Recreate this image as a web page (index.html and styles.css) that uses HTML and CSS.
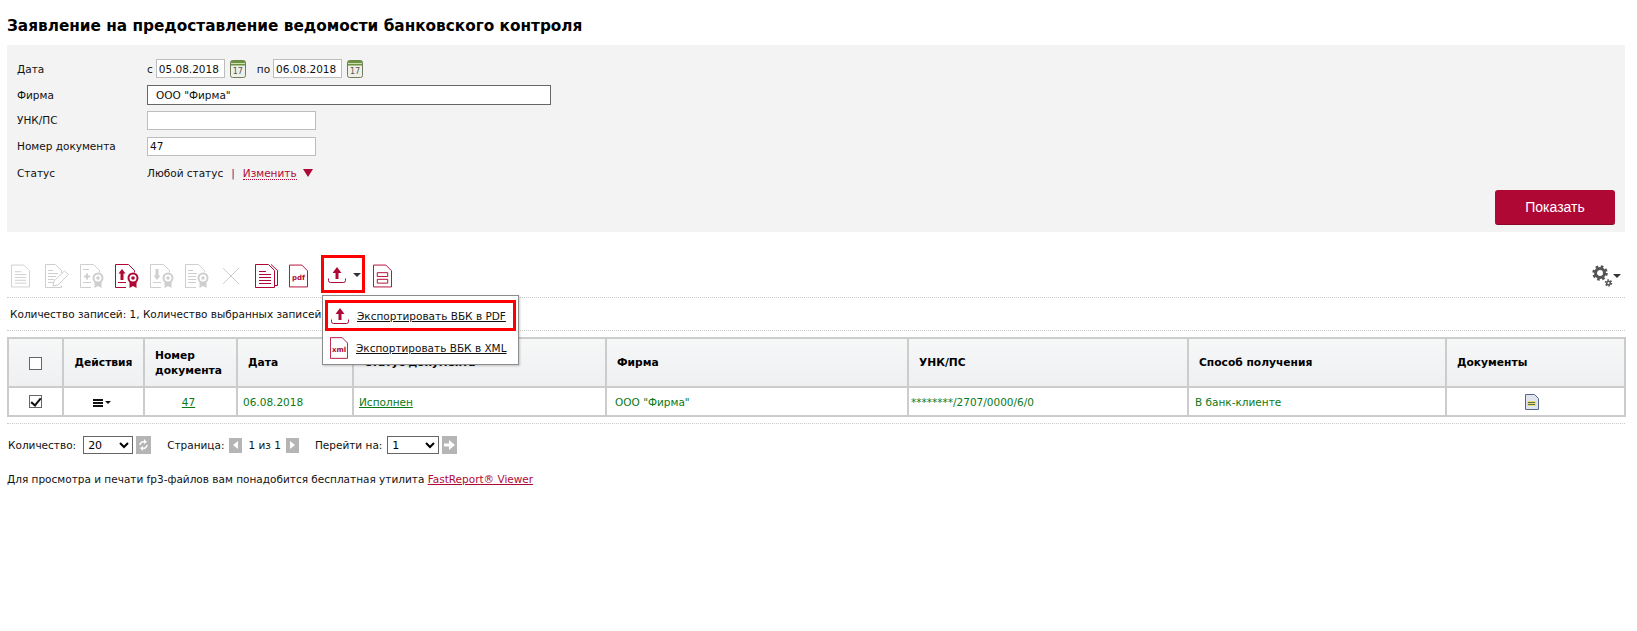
FILE: index.html
```html
<!DOCTYPE html>
<html lang="ru">
<head>
    <meta charset="UTF-8">
    <title>Заявление на предоставление ведомости банковского контроля</title>
    <link rel="stylesheet" href="styles.css">
</head>
<body>
<svg class="defs" width="0" height="0">
    <symbol id="sheet" viewBox="0 0 20 24">
        <path d="M.5.500h13l6 6v17H.5z" fill="none" stroke="currentColor"/>
    </symbol>
    <symbol id="doc" viewBox="0 0 20 24">
        <path d="M.5.500h13l6 6v17H.5z" fill="none" stroke="currentColor"/>
        <path d="M4 7.500h7M4 10.500h12M4 13.500h12M4 16.500h12M4 19.500h12" stroke="currentColor"/>
    </symbol>
    <symbol id="doc-edit" viewBox="0 0 24 24">
        <path d="M16.500 9V6.500l-6-6H.5v23h16v-2" fill="none" stroke="currentColor"/>
        <path d="M3 6.500h5M3 9.500h10M3 12.500h8M3 15.500h6M3 18.500h5" stroke="currentColor"/>
        <path d="M8 22l1-5L19.500 7l4 3.500L13 21z" fill="#fff" stroke="currentColor"/>
    </symbol>
    <symbol id="seal" viewBox="0 0 24 24">
        <path d="M11 23.500H.5V.5h13l6 6v2" fill="none" stroke="currentColor"/>
        <path d="M3 18.500h8" stroke="currentColor"/>
        <path d="M14.500 17v7l3.500-2 3.500 2v-7z" fill="currentColor"/>
        <circle cx="18" cy="14" r="4.500" fill="#fff" stroke="currentColor" stroke-width="2"/>
        <circle cx="18" cy="14" r="1.800" fill="currentColor"/>
    </symbol>
    <symbol id="export" viewBox="0 0 18 16">
        <path d="M9 0l4.500 6H10.500v6h-3V6H4.500z" fill="currentColor"/>
        <path d="M.5 11.500v2q0 2 2 2h13q2 0 2-2v-2" fill="none" stroke="currentColor"/>
    </symbol>
    <symbol id="calendar" viewBox="0 0 16 18">
        <rect x=".5" y=".5" width="15" height="17" rx="2" fill="#eef0e8" stroke="#6f7d5e"/>
        <path d="M1 2q0-1.500 1.500-1.500h11Q15 .5 15 2v3.500H1z" fill="#6c9440"/>
        <path d="M1 3.500h14" stroke="#cfe0b4"/>
    </symbol>
</svg>

<div class="page">
    <h1 class="title">Заявление на предоставление ведомости банковского контроля</h1>

    <form class="filter">
        <div class="filter-row">
            <span class="filter-label">Дата</span>
            <span class="date-part">с</span>
            <input class="field field-date" type="text" value="05.08.2018">
            <span class="cal"><svg width="16" height="18"><use href="#calendar"/></svg><i>17</i></span>
            <span class="date-part date-to">по</span>
            <input class="field field-date" type="text" value="06.08.2018">
            <span class="cal"><svg width="16" height="18"><use href="#calendar"/></svg><i>17</i></span>
        </div>
        <div class="filter-row">
            <span class="filter-label">Фирма</span>
            <input class="field field-firm" type="text" value="ООО &quot;Фирма&quot;">
        </div>
        <div class="filter-row">
            <span class="filter-label">УНК/ПС</span>
            <input class="field field-mid" type="text">
        </div>
        <div class="filter-row">
            <span class="filter-label">Номер документа</span>
            <input class="field field-mid" type="text" value="47">
        </div>
        <div class="filter-row filter-row-last">
            <span class="filter-label">Статус</span>
            <span>Любой статус</span>
            <span class="sep">|</span>
            <a class="change" href="#">Изменить</a>
            <span class="change-arrow"></span>
        </div>
        <div class="filter-actions">
            <button class="btn-show" type="button">Показать</button>
        </div>
    </form>

    <div class="toolbar">
        <svg class="tb tb-off tb-first" width="19" height="24"><use href="#doc"/></svg>
        <svg class="tb tb-off" width="24" height="24"><use href="#doc-edit"/></svg>
        <svg class="tb tb-off" width="24" height="24" viewBox="0 0 24 24"><use href="#seal"/><path d="M4 12.500h6M7 9.500v6" stroke="currentColor" stroke-width="2"/><path d="M3 5.500h6" stroke="currentColor"/></svg>
        <svg class="tb tb-on" width="24" height="24" viewBox="0 0 24 24"><use href="#seal"/><path d="M7 5l3.500 4.500H8.500V16h-3V9.500h-2z" fill="currentColor"/></svg>
        <svg class="tb tb-off" width="24" height="24" viewBox="0 0 24 24"><use href="#seal"/><path d="M7 16l3.500-4.500H8.500V5h-3v6.500h-2z" fill="currentColor"/></svg>
        <svg class="tb tb-off" width="24" height="24" viewBox="0 0 24 24"><use href="#seal"/><path d="M3 6.500h5M3 9.500h9M3 12.500h8M3 15.500h8" stroke="currentColor"/></svg>
        <svg class="tb tb-off tb-x" width="18" height="18" viewBox="0 0 18 18"><path d="M1 1l16 16M17 1L1 17" stroke="currentColor" fill="none"/></svg>
        <svg class="tb tb-on" width="23" height="24" viewBox="0 0 23 24">
            <path d="M16 .5l6.500 6v15H20" fill="none" stroke="currentColor"/>
            <path d="M.5.500h13l6 6v17H.5z" fill="none" stroke="currentColor"/>
            <path d="M4 7.500h7M4 10.500h12M4 13.500h12M4 16.500h12M4 19.500h12" stroke="currentColor"/>
        </svg>
        <span class="tb-ic tb-on tb-pdf"><svg width="19" height="24"><use href="#sheet"/></svg><b class="file-ext">pdf</b></span>
        <span class="export-btn">
            <svg class="tb-on" width="18" height="16"><use href="#export"/></svg>
            <span class="caret"></span>
        </span>
        <svg class="tb tb-on tb-last" width="19" height="24" viewBox="0 0 20 24">
            <path d="M.5.500h13l6 6v17H.5z" fill="none" stroke="currentColor"/>
            <path d="M4.500 8.500h11v4h-11zM4.500 15.500h11v4h-11z" fill="none" stroke="currentColor"/>
        </svg>
        <span class="gear">
            <svg width="21" height="22" viewBox="0 0 21 22">
                <g fill="none" stroke="#555">
                    <circle cx="8" cy="8" r="4.500" stroke-width="3"/>
                    <circle cx="8" cy="8" r="6.500" stroke-width="2.500" stroke-dasharray="2.600 2.500"/>
                    <circle cx="16.500" cy="18" r="1.800" stroke-width="1.500"/>
                    <circle cx="16.500" cy="18" r="3" stroke-width="1.500" stroke-dasharray="1.600 1.540"/>
                </g>
            </svg>
            <span class="caret"></span>
        </span>
    </div>

    <div class="records">Количество записей: 1, Количество выбранных записей: 1</div>

    <table class="docs">
        <colgroup>
            <col class="c-check"><col class="c-act"><col class="c-num"><col class="c-date">
            <col class="c-status"><col class="c-firm"><col class="c-unk"><col class="c-way"><col class="c-files">
        </colgroup>
        <thead>
            <tr>
                <th class="center"><span class="check"></span></th>
                <th class="center">Действия</th>
                <th>Номер<br>документа</th>
                <th>Дата</th>
                <th>Статус документа</th>
                <th>Фирма</th>
                <th>УНК/ПС</th>
                <th>Способ получения</th>
                <th>Документы</th>
            </tr>
        </thead>
        <tbody>
            <tr>
                <td class="center"><span class="check checked"></span></td>
                <td class="center td-act"><span class="burger"></span><span class="caret caret-sm"></span></td>
                <td class="center td-num"><a href="#">47</a></td>
                <td>06.08.2018</td>
                <td><a href="#">Исполнен</a></td>
                <td class="td-firm">ООО "Фирма"</td>
                <td class="td-unk">********/2707/0000/6/0</td>
                <td class="td-way">В банк-клиенте</td>
                <td class="center td-files">
                    <svg class="file-ic" width="14" height="16" viewBox="0 0 14 16">
                        <path d="M.5.500h9l4 4v11H.5z" fill="#dfe4ee" stroke="#56658a"/>
                        <path d="M2 7h9v5H2z" fill="#e6df7a"/>
                        <path d="M3 8.500h7M3 10.500h7" stroke="#5f6b45"/>
                    </svg>
                </td>
            </tr>
        </tbody>
    </table>

    <div class="pager">
        <span class="pager-count">Количество:</span>
        <select class="pick pick-count"><option>20</option></select>
        <span class="sq sq-big">
            <svg width="9" height="12" viewBox="0 0 9 12"><path d="M1 6a3.500 3.500 0 0 1 5-3M8 6a3.500 3.500 0 0 1-5 3" fill="none" stroke="#fff" stroke-width="1.500"/><path d="M5 0l3 3-3 2zM4 12L1 9l3-2z" fill="#fff"/></svg>
        </span>
        <span class="pager-gap">Страница:</span>
        <span class="sq"><i class="tri tri-l"></i></span>
        <span class="pager-of">1 из 1</span>
        <span class="sq"><i class="tri tri-r"></i></span>
        <span class="pager-gap">Перейти на:</span>
        <select class="pick pick-go"><option>1</option></select>
        <span class="sq sq-big sq-go">
            <svg width="11" height="10" viewBox="0 0 11 10"><path d="M0 3.500h5V0l6 5-6 5V6.500H0z" fill="#fff"/></svg>
        </span>
    </div>

    <p class="note">Для просмотра и печати fp3-файлов вам понадобится бесплатная утилита <a href="#">FastReport® Viewer</a></p>
</div>

<div class="export-menu">
    <a class="menu-item menu-item-hl" href="#"><svg class="tb-on" width="18" height="16"><use href="#export"/></svg><span>Экспортировать ВБК в PDF</span></a>
    <a class="menu-item menu-item-xml" href="#"><span class="tb-ic tb-on menu-xml"><svg width="18" height="24"><use href="#sheet"/></svg><b class="file-ext">xml</b></span><span>Экспортировать ВБК в XML</span></a>
</div>
</body>
</html>
```

FILE: styles.css
```css
html, body {
    margin: 0;
    padding: 0;
    background: #fff;
}

body {
    font-family: "DejaVu Sans", Tahoma, sans-serif;
    font-size: 10.5px;
    color: #111;
    position: relative;
}

.defs {
    position: absolute;
}

.page {
    padding: 0 12px 0 7px;
}

.title {
    margin: 0;
    padding-top: 16px;
    height: 29px;
    font-size: 15.3px;
    line-height: 20px;
    font-weight: bold;
    color: #000;
}

/* filter panel */
.filter {
    background: #f3f3f3;
    height: 187px;
    padding: 11px 10px 0 10px;
    box-sizing: border-box;
}

.filter-row {
    display: flex;
    align-items: center;
    height: 25.800px;
}

.filter-row-last {
    padding-top: 1px;
}

.filter-label {
    width: 130px;
    flex: none;
}

.field {
    box-sizing: border-box;
    border: 1px solid #bdbdbd;
    background: #fff;
    height: 19px;
    padding: 0 2px;
    font: 10.5px "DejaVu Sans", Tahoma, sans-serif;
    color: #111;
    margin: 0;
    outline: none;
}

.field-date {
    width: 69px;
}

.field-firm {
    width: 404px;
    height: 20px;
    border: 1px solid #666;
    padding-left: 8px;
}

.field-mid {
    width: 169px;
}

.date-part {
    margin-right: 3px;
}

.date-to {
    margin-left: 11px;
}

.cal {
    position: relative;
    width: 16px;
    height: 18px;
    margin-left: 5px;
}

.cal i {
    position: absolute;
    left: 0;
    right: 0;
    top: 7px;
    text-align: center;
    font-style: normal;
    font-size: 8px;
    line-height: 10px;
    color: #555;
}

.sep {
    margin: 0 8px;
    color: #223a80;
}

.change {
    color: #b00835;
    text-decoration: none;
    border-bottom: 1px dotted #b00835;
}

.change-arrow {
    width: 0;
    height: 0;
    margin-left: 6px;
    border-left: 5px solid transparent;
    border-right: 5px solid transparent;
    border-top: 8px solid #b00835;
}

.filter-actions {
    display: flex;
    justify-content: flex-end;
    margin-top: 4px;
}

.btn-show {
    width: 120px;
    height: 35px;
    background: #b00835;
    border: 0;
    border-bottom: 1px solid #8a0628;
    border-radius: 3px;
    color: #fff;
    font: 14px "Liberation Sans", Arial, sans-serif;
}

/* toolbar */
.toolbar {
    display: flex;
    align-items: center;
    height: 66px;
    padding: 22px 4px 0 4px;
    box-sizing: border-box;
    border-bottom: 1px dotted #ccc;
}

.tb-off {
    color: #cfcfcf;
}

.tb-on {
    color: #b00835;
}

.tb, .tb-ic {
    flex: none;
    margin-right: 11px;
}

.tb-first {
    margin-right: 15px;
}

.tb-ic {
    position: relative;
    width: 24px;
    height: 24px;
}

.tb-x {
    margin: 0 15px 0 2px;
}

.tb-pdf {
    width: 19px;
    margin-right: 13px;
}

.file-ext {
    position: absolute;
    left: 1px;
    right: 1px;
    bottom: 5px;
    text-align: center;
    font: bold 7px/10px "DejaVu Sans", sans-serif;
}

.export-btn {
    display: flex;
    align-items: center;
    box-sizing: border-box;
    width: 44px;
    height: 38px;
    border: 3px solid #f00;
    padding: 3px 0 0 4px;
    margin: -4px 8px 0 0;
    flex: none;
}

.caret {
    display: inline-block;
    width: 0;
    height: 0;
    margin-left: 7px;
    border-left: 4px solid transparent;
    border-right: 4px solid transparent;
    border-top: 4px solid #333;
}

.gear {
    margin-left: auto;
    display: flex;
    align-items: center;
}

.gear .caret {
    margin-left: 0;
}

.records {
    height: 33px;
    line-height: 33px;
    padding-left: 3px;
    border-bottom: 1px dotted #ccc;
    box-sizing: border-box;
}

/* table */
.docs {
    border-collapse: collapse;
    table-layout: fixed;
    width: 1617px;
    margin-top: 6px;
}

.c-check { width: 55px; }
.c-act { width: 81px; }
.c-num { width: 93px; }
.c-date { width: 116px; }
.c-status { width: 253px; }
.c-firm { width: 302px; }
.c-unk { width: 280px; }
.c-way { width: 258px; }
.c-files { width: 179px; }

.docs th, .docs td {
    border: 2px solid #ccc;
    padding: 0 10px;
    text-align: left;
}

.docs th {
    height: 47px;
    font-size: 10.7px;
    line-height: 15px;
    background: linear-gradient(#f6f7f7, #eff0f2);
    color: #000;
}

.docs td {
    height: 27px;
    color: #0a7a16;
    padding: 0 5px;
}

.docs .center {
    text-align: center;
}

.docs .td-act {
    padding-right: 8px;
}

.docs .td-num {
    padding-right: 9px;
}

.docs .td-firm {
    padding-left: 8px;
}

.docs .td-unk {
    padding-left: 2px;
}

.docs .td-way {
    padding-left: 6px;
}

.docs .td-files {
    padding-right: 13px;
}

.docs a {
    color: #0a7a16;
}

.check {
    display: inline-block;
    box-sizing: border-box;
    width: 13px;
    height: 13px;
    border: 1px solid #666;
    background: #fff;
    position: relative;
    vertical-align: middle;
}

.checked::after {
    content: "";
    position: absolute;
    left: 3px;
    top: 0;
    width: 4px;
    height: 8px;
    border: solid #111;
    border-width: 0 2px 2px 0;
    transform: rotate(40deg);
}

.burger {
    display: inline-block;
    width: 10px;
    height: 2px;
    background: #111;
    box-shadow: 0 -3px 0 #111, 0 3px 0 #111;
    vertical-align: 2px;
}

.caret-sm {
    margin-left: 2px;
    border-width: 3px 3px 0;
    border-top-color: #111;
    vertical-align: 2px;
}

.file-ic {
    vertical-align: middle;
}

/* pager */
.pager {
    display: flex;
    align-items: center;
    gap: 5px;
    margin-top: 6px;
    padding: 11px 0 0 1px;
    height: 20px;
    border-top: 1px dotted #ccc;
}

.pager-count {
    margin-right: 2px;
}

.pager-of {
    margin-left: 1px;
}

.pick {
    width: 50px;
    height: 18px;
    font: 11px "DejaVu Sans", sans-serif;
    background: #fff;
    border: 1px solid #666;
    padding: 0;
    margin: 0;
}

.pick-count {
    margin-right: -2px;
}

.pick-go {
    width: 52px;
}

.sq {
    display: inline-flex;
    align-items: center;
    justify-content: center;
    width: 13px;
    height: 15px;
    background: #b5b5b5;
}

.sq-big {
    width: 15px;
    height: 18px;
}

.sq-go {
    margin-left: -2px;
}

.tri {
    width: 0;
    height: 0;
    border-top: 4px solid transparent;
    border-bottom: 4px solid transparent;
}

.tri-l {
    border-right: 5px solid #fff;
}

.tri-r {
    border-left: 5px solid #fff;
}

.pager-gap {
    margin-left: 11px;
}

.note {
    margin: 18px 0 0 0;
}

.note a {
    color: #b00835;
}

/* export menu, opened over the table */
.export-menu {
    position: absolute;
    left: 322px;
    top: 295px;
    width: 197px;
    height: 70px;
    box-sizing: border-box;
    background: #fff;
    border: 1px solid #8c8c8c;
    box-shadow: 1px 1px 2px rgba(0, 0, 0, 0.2);
    padding: 4px 2px;
}

.menu-item {
    display: flex;
    align-items: center;
    gap: 8px;
    height: 31px;
    box-sizing: border-box;
    padding-left: 6px;
    color: #111;
    white-space: nowrap;
}

.menu-item-hl {
    border: 3px solid #f00;
    padding-left: 3px;
}

.menu-item-xml {
    margin-top: 1px;
    padding-left: 5px;
}

.menu-xml {
    width: 18px;
    height: 24px;
    margin: 0;
}
```
